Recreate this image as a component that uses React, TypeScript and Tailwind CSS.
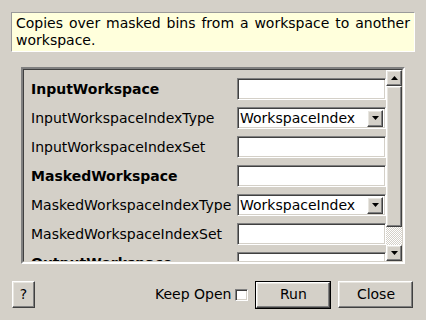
const raised =
  "border border-t-white border-l-white border-r-[#404040] border-b-[#404040] shadow-[inset_-1px_-1px_0_#808080,inset_1px_1px_0_#e8e6e0] bg-[#d4d0c8]";
const sunken =
  "border border-t-[#808080] border-l-[#808080] border-r-white border-b-white shadow-[inset_1px_1px_0_#404040,inset_-1px_-1px_0_#d4d0c8]";

const Arrow = ({ up }: { up?: boolean }) => (
  <svg width="7" height="4" viewBox="0 0 7 4">
    {up ? <polygon points="0,4 7,4 3.5,0" fill="#000" /> : <polygon points="0,0 7,0 3.5,4" fill="#000" />}
  </svg>
);

const TextBox = () => <div className={`h-[22px] w-[149px] bg-white ${sunken}`} />;

const Combo = () => (
  <div className={`h-[22px] w-[149px] bg-white flex items-center pl-[2px] pr-[2px] ${sunken}`}>
    <span className="flex-1 text-[14px] leading-none">WorkspaceIndex</span>
    <div className={`w-[16px] h-[17px] flex items-center justify-center ${raised}`}>
      <Arrow />
    </div>
  </div>
);

const rows: { label: string; bold?: boolean; combo?: boolean }[] = [
  { label: "InputWorkspace", bold: true },
  { label: "InputWorkspaceIndexType", combo: true },
  { label: "InputWorkspaceIndexSet" },
  { label: "MaskedWorkspace", bold: true },
  { label: "MaskedWorkspaceIndexType", combo: true },
  { label: "MaskedWorkspaceIndexSet" },
  { label: "OutputWorkspace", bold: true },
];

export default function App() {
  return (
    <div className="w-[426px] h-[320px] bg-[#d4d0c8] text-black font-['DejaVu_Sans',sans-serif] flex flex-col overflow-hidden">
      <div className="ml-[11px] mt-[12px] w-[404px] h-[40px] bg-[#ffffdc] border border-t-[#9a9a9a] border-l-[#9a9a9a] border-r-white border-b-white px-[4px] pt-[2px] text-[14px] leading-[17px] text-justify [text-align-last:left]">
        Copies over masked bins from a workspace to another workspace.
      </div>

      <div className="ml-[21px] mt-[15px] w-[384px] h-[197px] flex border-2 border-t-[#808080] border-l-[#808080] border-r-white border-b-white">
        <div className="flex flex-1 border border-t-[#404040] border-l-[#404040] border-r-[#d4d0c8] border-b-[#d4d0c8] min-h-0">
          <div className="flex-1 overflow-hidden pt-[8px] pl-[7px] flex flex-col gap-[7px]">
            {rows.map((r) => (
              <div key={r.label} className="flex items-center h-[22px] shrink-0">
                <span className={`w-[206px] text-[14px] leading-none ${r.bold ? "font-bold" : ""}`}>{r.label}</span>
                {r.combo ? <Combo /> : <TextBox />}
              </div>
            ))}
          </div>
          <div className="w-[16px] flex flex-col">
            <div className={`h-[16px] flex items-center justify-center ${raised}`}>
              <Arrow up />
            </div>
            <div className={`h-[141px] ${raised}`} />
            <div className="flex-1 bg-[repeating-conic-gradient(#ffffff_0_25%,#d4d0c8_0_50%)] bg-[length:2px_2px]" />
            <div className={`h-[16px] flex items-center justify-center ${raised}`}>
              <Arrow />
            </div>
          </div>
        </div>
      </div>

      <div className="flex items-center mt-[17px] pl-[12px] h-[27px]">
        <button className={`w-[23px] h-[27px] text-[14px] ${raised}`}>?</button>
        <span className="ml-[120px] text-[14px]">Keep Open</span>
        <div className={`ml-[4px] w-[13px] h-[12px] bg-white ${sunken}`} />
        <button className="ml-[7px] w-[76px] h-[28px] border border-black">
          <div className={`w-full h-full flex items-center justify-center text-[14px] ${raised}`}>Run</div>
        </button>
        <button className={`ml-[7px] w-[75px] h-[27px] text-[14px] ${raised}`}>Close</button>
      </div>
    </div>
  );
}
